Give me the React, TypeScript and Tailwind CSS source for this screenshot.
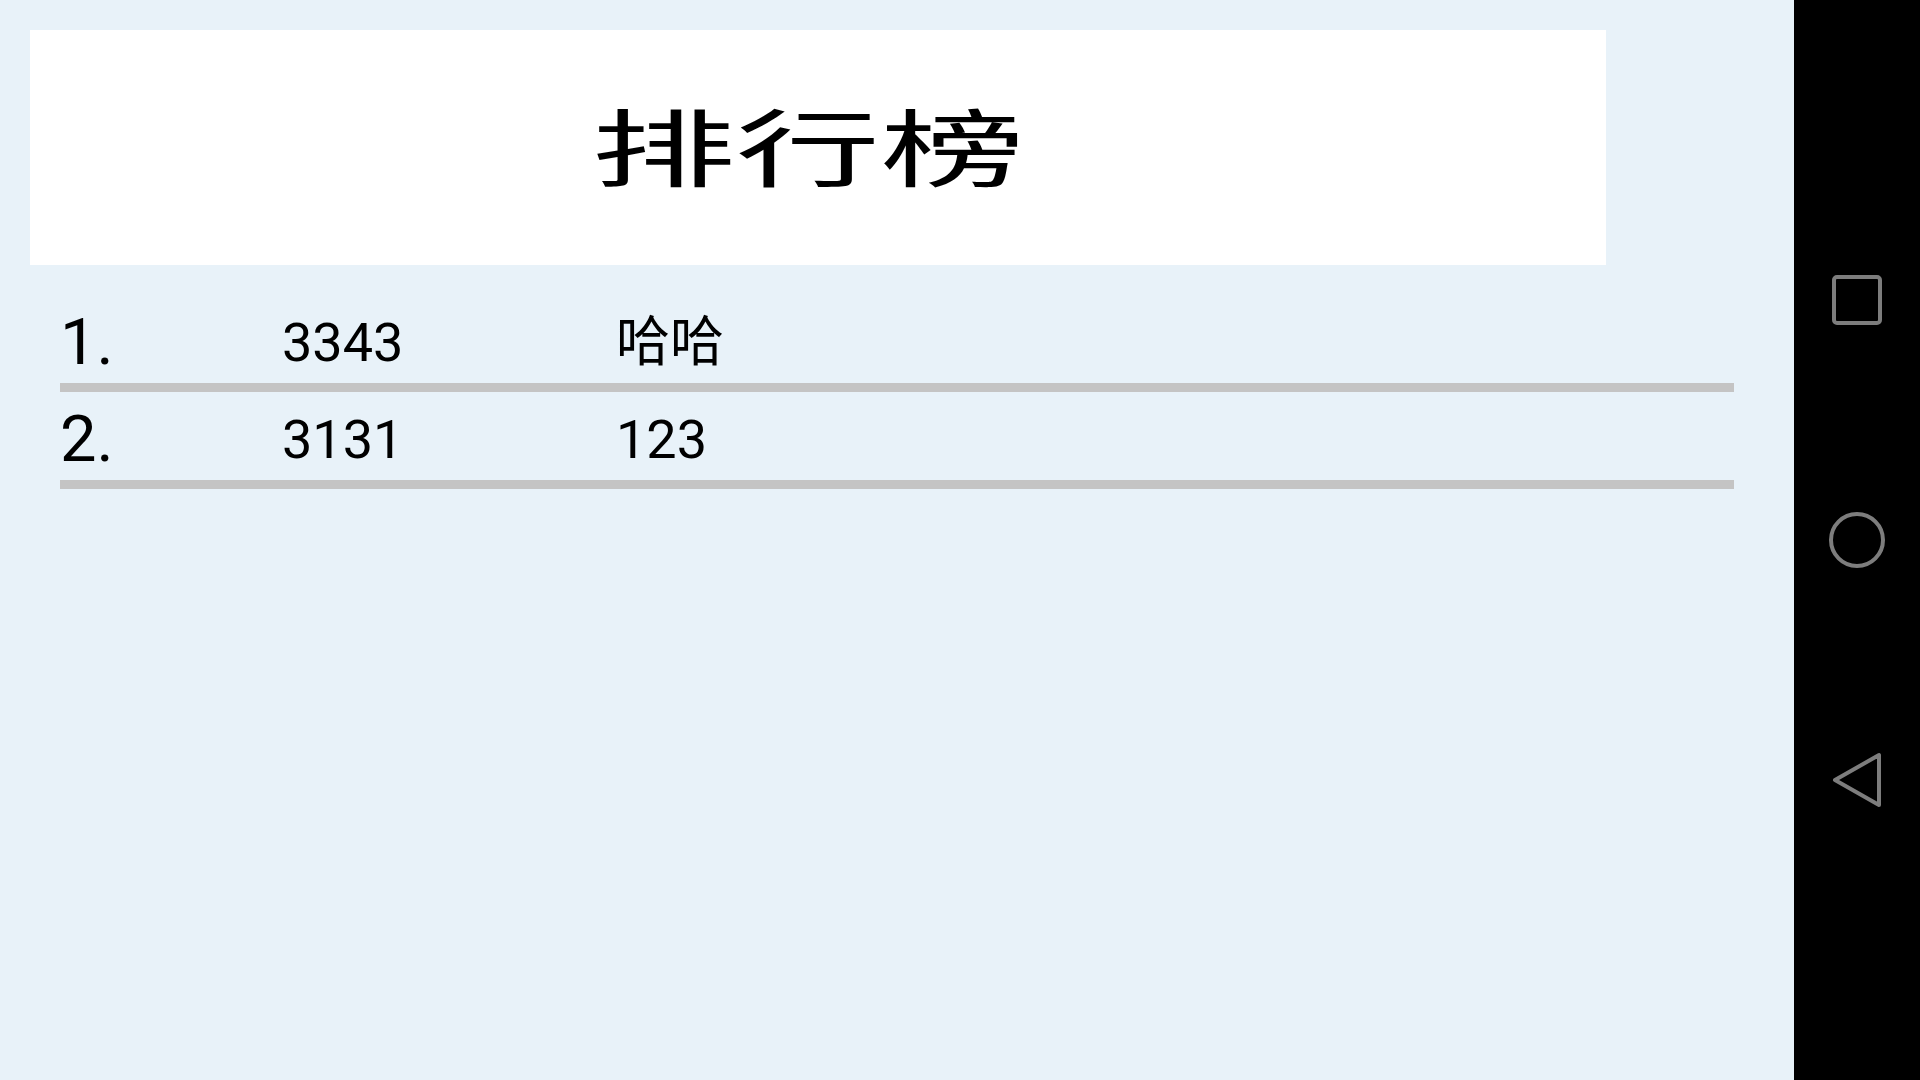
const rows = [
  { rank: "1.", score: "3343", name: "哈哈" },
  { rank: "2.", score: "3131", name: "123" },
];

function NavBar() {
  return (
    <div className="w-[126px] h-screen bg-black flex flex-col items-center justify-center gap-[180px]">
      <svg width="60" height="60" viewBox="0 0 60 60">
        <rect x="7" y="7" width="46" height="46" rx="3" fill="none" stroke="#7d7d7d" strokeWidth="4" />
      </svg>
      <svg width="60" height="60" viewBox="0 0 60 60">
        <circle cx="30" cy="30" r="26" fill="none" stroke="#7d7d7d" strokeWidth="4" />
      </svg>
      <svg width="60" height="60" viewBox="0 0 60 60">
        <path d="M8 30 L52 5 L52 55 Z" fill="none" stroke="#7d7d7d" strokeWidth="4" strokeLinejoin="round" />
      </svg>
    </div>
  );
}

export default function App() {
  return (
    <div className="flex w-screen h-screen overflow-hidden bg-[#e8f2f9] font-['Roboto','Noto_Sans_CJK_SC',sans-serif] text-black">
      <main className="flex-1 pt-[30px]">
        <div className="ml-[30px] w-[1576px] h-[235px] bg-white flex items-center justify-center pr-[20px] pb-[8px]">
          <span className="inline-block scale-x-[1.72] text-[84px] leading-none font-normal font-['Noto_Sans_CJK_SC',sans-serif]">
            排行榜
          </span>
        </div>

        <div className="ml-[60px] w-[1674px] mt-[30px]">
          {rows.map((r) => (
            <div key={r.rank}>
              <div className="h-[88px] flex">
                <span className="w-[222px] pt-[15px] text-[65px] leading-none">{r.rank}</span>
                <span className="w-[334px] pt-[21px] text-[54px] leading-none">{r.score}</span>
                <span className="pt-[21px] text-[54px] leading-none">{r.name}</span>
              </div>
              <div className="h-[9px] bg-[#c4c4c4]" />
            </div>
          ))}
        </div>
      </main>
      <NavBar />
    </div>
  );
}
